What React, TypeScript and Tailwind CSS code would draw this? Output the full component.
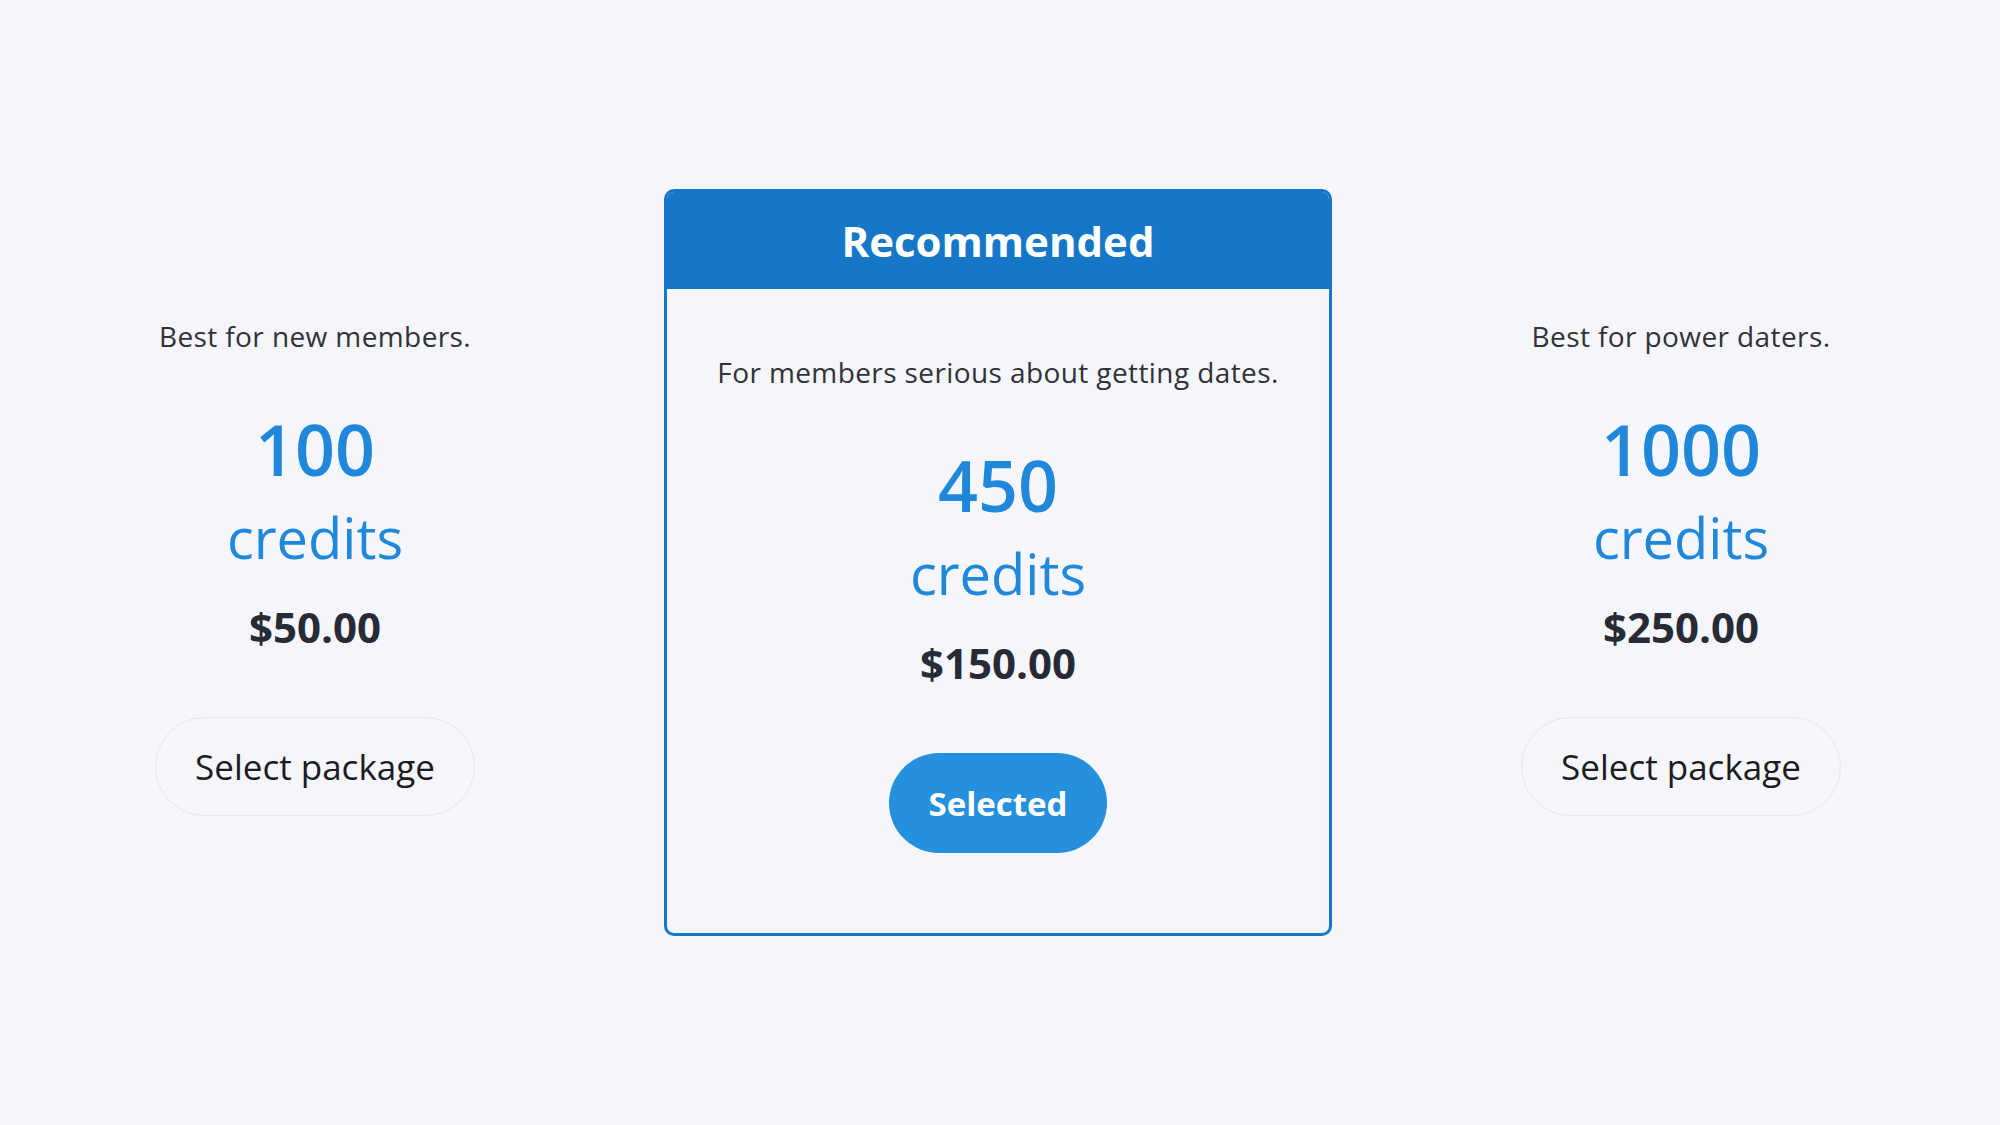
import React from "react";

type Pkg = { desc: string; credits: string; price: string };

const font = { fontFamily: '"Open Sans", "Noto Sans", sans-serif' };

function Content({ p, selected }: { p: Pkg; selected?: boolean }) {
  return (
    <div className="flex flex-col items-center text-center">
      <p className="text-[28px] leading-[40px] text-[#303236] font-normal tracking-[0.4px]">{p.desc}</p>
      <div className="mt-[53px] text-[70px] leading-[80px] font-semibold text-[#1f88da]">{p.credits}</div>
      <div className="mt-[13px] text-[56px] leading-[70px] font-normal text-[#1f88da]">credits</div>
      <div className="mt-[30px] text-[42px] leading-[50px] font-bold text-[#272b35]">{p.price}</div>
      {selected ? (
        <button className="mt-[65px] h-[100px] w-[218px] rounded-full bg-[#2590dd] text-white text-[33px] font-bold leading-none flex items-center justify-center">
          Selected
        </button>
      ) : (
        <button className="mt-[65px] h-[99px] w-[320px] rounded-full border border-[#e6e7ec] bg-transparent text-[#1c1c1f] text-[35px] font-medium leading-none flex items-center justify-center">
          Select package
        </button>
      )}
    </div>
  );
}

export default function App() {
  const left: Pkg = { desc: "Best for new members.", credits: "100", price: "$50.00" };
  const mid: Pkg = { desc: "For members serious about getting dates.", credits: "450", price: "$150.00" };
  const right: Pkg = { desc: "Best for power daters.", credits: "1000", price: "$250.00" };
  return (
    <div className="w-full h-[1125px] bg-[#f5f6fb] flex flex-col justify-center" style={font}>
      <div className="flex items-start gap-[34px]">
        <div className="w-[630px] pt-[127px]">
          <Content p={left} />
        </div>
        <div className="w-[668px] h-[747px] rounded-[10px] border-[3px] border-[#1677c9] overflow-hidden flex flex-col">
          <div className="h-[97px] bg-[#1677c9] flex items-center justify-center">
            <span className="text-white text-[42px] font-bold leading-none">Recommended</span>
          </div>
          <div className="pt-[63px]">
            <Content p={mid} selected />
          </div>
        </div>
        <div className="w-[630px] pt-[127px]">
          <Content p={right} />
        </div>
      </div>
    </div>
  );
}
